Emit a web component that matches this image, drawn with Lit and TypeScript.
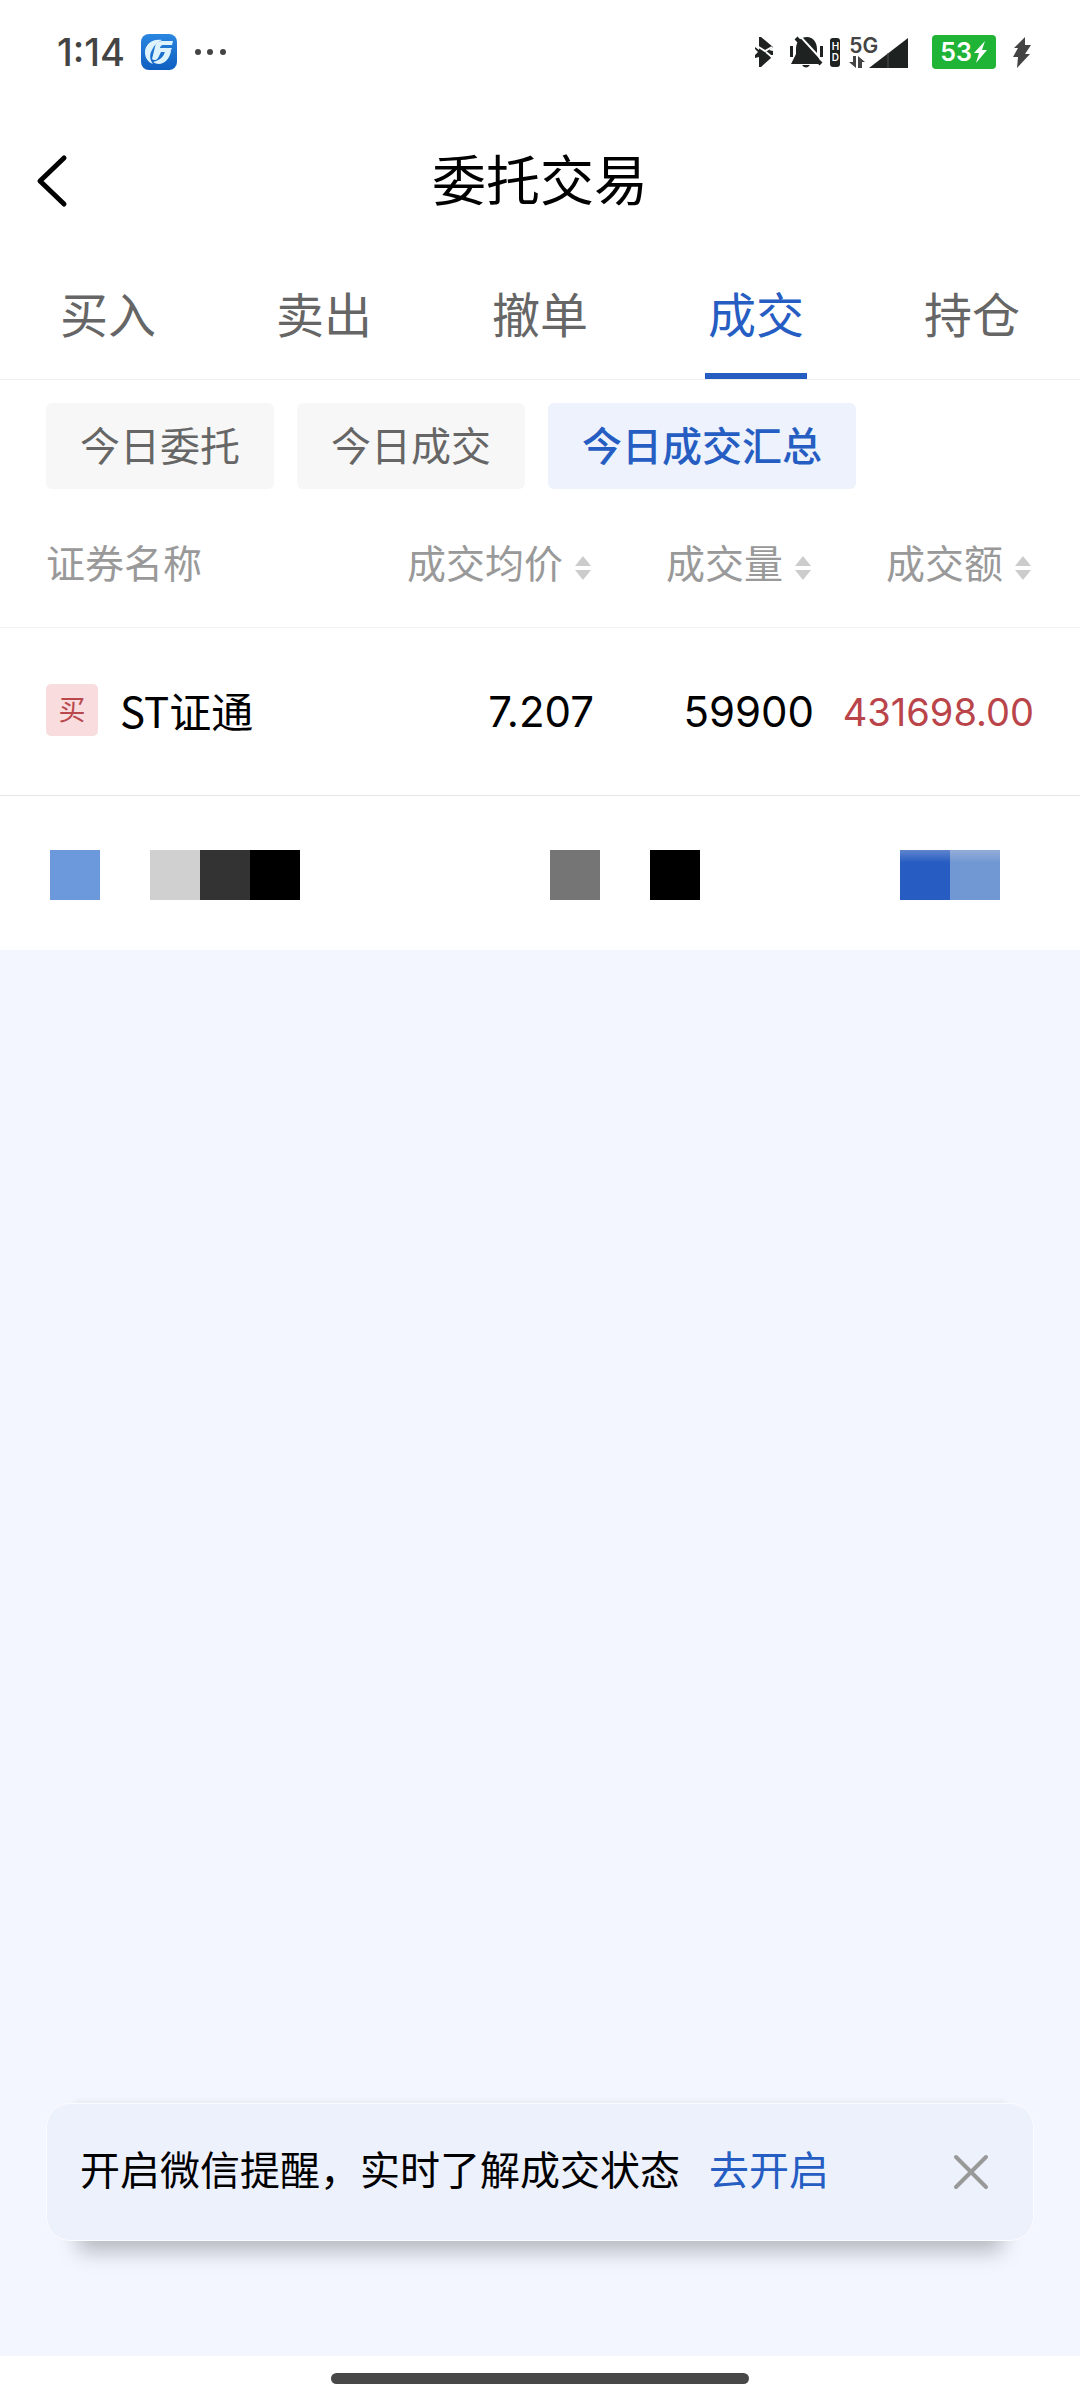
import { LitElement, html, css, nothing } from "lit";
import { customElement, state } from "lit/decorators.js";
import { classMap } from "lit/directives/class-map.js";
import { styleMap } from "lit/directives/style-map.js";

interface Fill {
  side: string;
  name: string;
  price: string;
  volume: string;
  amount: string;
}

const TABS = ["买入", "卖出", "撤单", "成交", "持仓"];
const FILTERS = ["今日委托", "今日成交", "今日成交汇总"];
const SORTABLE = ["成交均价", "成交量", "成交额"];
const FILLS: Fill[] = [
  { side: "买", name: "ST证通", price: "7.207", volume: "59900", amount: "431698.00" },
];

// Masked row: one entry per cell of the mosaic, empty where nothing is drawn.
const MOSAIC: string[] = [
  "#6c98dc", "", "#d0d0d0", "#333333", "#000000", "", "", "", "", "",
  "#757575", "", "#000000", "", "", "", "",
  "linear-gradient(#5f84cc, #275dc2 25%)",
  "linear-gradient(#94acd8, #7198d2 25%)",
];

@customElement("status-bar")
class StatusBar extends LitElement {
  static styles = css`
    :host {
      display: flex;
      align-items: center;
      justify-content: space-between;
      height: 104px;
      padding: 0 48px 0 57px;
      color: #444;
      font-family: Inter, "Liberation Sans", sans-serif;
    }
    .group {
      display: flex;
      align-items: center;
    }
    .clock {
      font-size: 38px;
      line-height: 40px;
      font-weight: 500;
    }
    .app {
      margin-left: 16px;
    }
    .more {
      margin-left: 17px;
    }
    .bell {
      margin-left: 17px;
    }
    .hd {
      display: flex;
      flex-direction: column;
      justify-content: center;
      width: 10px;
      height: 29px;
      margin-left: 6px;
      border-radius: 3px;
      background: #1e2220;
      color: #fff;
      font-size: 10px;
      line-height: 11px;
      font-weight: 600;
      text-align: center;
    }
    .signal {
      display: grid;
      grid-template-columns: 20px 39px;
      margin-left: 9px;
    }
    .net {
      font-size: 21px;
      line-height: 18px;
      font-weight: 600;
    }
    .bars {
      grid-row: 1 / 3;
      grid-column: 2;
      align-self: end;
    }
    .battery {
      display: flex;
      align-items: center;
      gap: 2px;
      height: 34px;
      margin-left: 24px;
      padding: 0 8px;
      border-radius: 4px;
      background: #20b436;
      color: #fff;
      font-size: 25px;
      line-height: 34px;
      font-weight: 600;
    }
    .charge {
      margin-left: 16px;
    }
    svg {
      display: block;
    }
  `;

  render() {
    return html`
      <div class="group">
        <span class="clock">1:14</span>
        <svg class="app" width="36" height="36" viewBox="0 0 36 36" aria-hidden="true">
          <defs>
            <linearGradient id="g" x1="0" y1="0" x2="0" y2="1">
              <stop offset="0" stop-color="#2a86e0" />
              <stop offset="1" stop-color="#0f5fc0" />
            </linearGradient>
          </defs>
          <rect width="36" height="36" rx="8" fill="url(#g)" />
          <path
            d="M21 6C11 4 4 11 4 18c0 6 3 10 8 12-3-4-4-9-1-14 2-5 6-8 10-10z"
            fill="#dff3ff"
          />
          <path
            d="M32 7H22c-5 0-7 2-8 6l-3 12c2 2 5 1 6-1l3-6h9l2-4H19c0-1 1-3 3-3h9z"
            fill="#dff3ff"
          />
          <path
            d="M30 17h-6c-1 6-5 9-12 11 7 5 16 0 18-11z"
            fill="#dff3ff"
          />
        </svg>
        <svg class="more" width="34" height="8" viewBox="0 0 34 8" fill="#444" aria-hidden="true">
          <circle cx="4" cy="4" r="3" /><circle cx="16" cy="4" r="3" /><circle cx="29" cy="4" r="3" />
        </svg>
      </div>
      <div class="group">
        <svg width="18" height="30" viewBox="0 0 18 30" aria-hidden="true">
          <path
            d="M4 0h2l12 10-4 3 4 1v4l-3 0 1 3L6 30H4V20l-4 1v-3l3-3-3-3v-2l4 3z"
            fill="#1e2220"
          />
          <path d="M2 9l8 5 7-4M11 15l6 5" fill="none" stroke="#fff" stroke-width="2" />
        </svg>
        <svg class="bell" width="34" height="32" viewBox="0 0 34 32" aria-hidden="true">
          <path
            d="M1 28l5-10v-5C6 5 11 1 17 1s10 5 10 12v5l2 5v5z"
            fill="#1e2220"
          />
          <path d="M6 2l25 26" stroke="#1e2220" stroke-width="4" />
          <path d="M9 -1l23 25" stroke="#fff" stroke-width="2" />
          <path d="M0 10h3v11H0zM30 10h3v11h-3zM12 29h8q-4 5-8 0z" fill="#1e2220" />
        </svg>
        <span class="hd"><span>H</span><span>D</span></span>
        <span class="signal">
          <span class="net">5G</span>
          <svg width="16" height="13" viewBox="0 0 16 13" fill="#444" aria-hidden="true">
            <path d="M4 1h3v12L0 7h4zM9 1l7 6h-3v6H9z" />
          </svg>
          <svg class="bars" width="39" height="30" viewBox="0 0 39 30" aria-hidden="true">
            <path d="M0 30L39 0v30z" fill="#1e2220" />
            <path d="M19 15v15" stroke="#555" stroke-width="1" />
          </svg>
        </span>
        <span class="battery">
          53
          <svg width="14" height="22" viewBox="0 0 14 22" fill="#fff" aria-hidden="true">
            <path d="M11 0L0 12h5L2 22 13 9H8z" />
          </svg>
        </span>
        <svg class="charge" width="20" height="31" viewBox="0 0 20 31" fill="#444" aria-hidden="true">
          <path d="M13 0L2 11h4l-5 9h5l-1 11 13-14h-5l6-9h-6z" />
        </svg>
      </div>
    `;
  }
}

@customElement("app-root")
class AppRoot extends LitElement {
  @state() private tab = 3;
  @state() private filter = 2;
  @state() private reminder = true;

  static styles = css`
    :host {
      display: flex;
      flex-direction: column;
      min-height: 100vh;
      background: #fff;
      color: #000;
      font-family: "Noto Sans CJK SC", sans-serif;
      font-size: 40px;
      line-height: 48px;
    }
    button {
      margin: 0;
      padding: 0;
      border: 0;
      background: none;
      color: inherit;
      font: inherit;
      cursor: pointer;
    }
    svg {
      display: block;
    }
    .head {
      display: grid;
      grid-template-columns: 80px 1fr 80px;
      align-items: center;
      height: 152px;
    }
    .back {
      padding: 22px 0 20px 36px;
    }
    .title {
      margin: 0;
      padding-bottom: 4px;
      font-size: 54px;
      line-height: 64px;
      font-weight: 400;
      text-align: center;
    }
    .tabs {
      display: grid;
      grid-template-columns: repeat(5, 1fr);
      height: 123px;
      border-bottom: 1px solid #eee;
      color: #666;
      font-size: 48px;
    }
    .tab {
      display: flex;
      flex-direction: column;
      align-items: center;
      justify-content: space-between;
      padding-top: 32px;
    }
    .tab::after {
      content: "";
      width: 102px;
      height: 6px;
    }
    .tab.on {
      color: #255dc2;
    }
    .tab.on::after {
      background: #255dc2;
    }
    .filters {
      display: flex;
      gap: 23px;
      padding: 23px 46px 0;
    }
    .chip {
      height: 86px;
      padding: 0 34px 4px;
      border-radius: 6px;
      background: #f7f7f7;
      color: #666;
    }
    .chip.on {
      background: #edf2fc;
      color: #255dc2;
      font-weight: 500;
    }
    .fills {
      width: 100%;
      border-collapse: collapse;
      table-layout: fixed;
    }
    .num {
      width: 220px;
    }
    .last {
      width: 266px;
    }
    th {
      height: 132px;
      padding: 6px 2px 0 0;
      border-bottom: 1px solid #f3f3f3;
      color: #999;
      font-size: 39px;
      line-height: 38px;
      font-weight: 400;
      text-align: right;
    }
    td {
      height: 167px;
      padding: 0;
      border-bottom: 1px solid #e5e5e5;
      font-family: Inter, sans-serif;
      font-size: 42px;
      text-align: right;
    }
    th:first-child,
    td:first-child {
      padding-left: 46px;
      text-align: left;
    }
    th:last-child {
      padding-right: 48px;
    }
    td:last-child {
      padding-right: 46px;
    }
    .sort {
      display: inline-flex;
      align-items: flex-end;
      gap: 12px;
      vertical-align: top;
      white-space: nowrap;
    }
    .stock {
      display: flex;
      align-items: center;
      gap: 22px;
      padding-bottom: 4px;
      font-family: "Noto Sans CJK SC", sans-serif;
    }
    .side {
      width: 52px;
      height: 52px;
      border-radius: 5px;
      background: #f8dcde;
      color: #b9484d;
      font-size: 27px;
      line-height: 50px;
      text-align: center;
    }
    .amount {
      color: #b9444a;
      font-size: 38px;
    }
    .mosaic {
      display: grid;
      grid-template-columns: repeat(19, 1fr);
      padding: 54px 80px 50px 50px;
    }
    .block {
      aspect-ratio: 1;
    }
    .rest {
      display: flex;
      flex: 1;
      flex-direction: column;
      justify-content: flex-end;
      padding: 0 46px 115px;
      background: #f3f6ff;
    }
    .notice {
      display: flex;
      align-items: center;
      height: 136px;
      padding: 0 38px 0 33px;
      border: 1px solid #fafcff;
      border-radius: 24px;
      background: #edf1fc;
      box-shadow:
        0 42px 20px -32px rgba(0, 0, 0, 0.26),
        0 -30px 6px -28px rgba(0, 0, 0, 0.05);
    }
    .message {
      display: flex;
      flex-wrap: wrap;
      gap: 0 29px;
      padding-bottom: 8px;
    }
    .open {
      color: #255dc2;
      text-decoration: none;
    }
    .close {
      margin-left: auto;
      padding: 6px;
    }
    .home {
      display: flex;
      justify-content: center;
      padding: 17px 0 16px;
    }
    .pill {
      width: 418px;
      height: 11px;
      border-radius: 6px;
      background: #484848;
    }
  `;

  private sortIcon() {
    return html`<svg width="17" height="24" viewBox="0 0 17 24" fill="#ccc" aria-hidden="true">
      <path d="M8 0l8 10H0zM0 14h16L8 24z" />
    </svg>`;
  }

  render() {
    return html`
      <status-bar></status-bar>
      <header class="head">
        <button class="back" aria-label="返回">
          <svg width="32" height="54" viewBox="0 0 32 54" aria-hidden="true">
            <path
              d="M28 4L4 27l24 23"
              fill="none"
              stroke="#000"
              stroke-width="5"
              stroke-linecap="round"
              stroke-linejoin="round"
            />
          </svg>
        </button>
        <h1 class="title">委托交易</h1>
      </header>
      <nav class="tabs">
        ${TABS.map(
          (label, i) => html`<button
            class=${classMap({ tab: true, on: i === this.tab })}
            aria-pressed=${i === this.tab}
            @click=${() => (this.tab = i)}
          >${label}</button>`,
        )}
      </nav>
      <div class="filters">
        ${FILTERS.map(
          (label, i) => html`<button
            class=${classMap({ chip: true, on: i === this.filter })}
            aria-pressed=${i === this.filter}
            @click=${() => (this.filter = i)}
          >${label}</button>`,
        )}
      </div>
      <table class="fills">
        <colgroup>
          <col /><col class="num" /><col class="num" /><col class="last" />
        </colgroup>
        <thead>
          <tr>
            <th scope="col">证券名称</th>
            ${SORTABLE.map(
              (label) => html`<th scope="col">
                <button class="sort">${label}${this.sortIcon()}</button>
              </th>`,
            )}
          </tr>
        </thead>
        <tbody>
          ${FILLS.map(
            (f) => html`<tr>
              <td>
                <div class="stock"><span class="side">${f.side}</span>${f.name}</div>
              </td>
              <td>${f.price}</td>
              <td>${f.volume}</td>
              <td class="amount">${f.amount}</td>
            </tr>`,
          )}
        </tbody>
      </table>
      <div class="mosaic" aria-hidden="true">
        ${MOSAIC.map(
          (fill) => html`<span class="block" style=${styleMap(fill ? { background: fill } : {})}></span>`,
        )}
      </div>
      <main class="rest">
        ${this.reminder
          ? html`<div class="notice">
              <div class="message">
                <span>开启微信提醒，实时了解成交状态</span>
                <a class="open" href="#reminder">去开启</a>
              </div>
              <button class="close" aria-label="关闭" @click=${() => (this.reminder = false)}>
                <svg width="36" height="36" viewBox="0 0 36 36" aria-hidden="true">
                  <path
                    d="M3 3l30 30M33 3L3 33"
                    stroke="#999"
                    stroke-width="4"
                    stroke-linecap="round"
                  />
                </svg>
              </button>
            </div>`
          : nothing}
      </main>
      <footer class="home"><span class="pill"></span></footer>
    `;
  }
}
